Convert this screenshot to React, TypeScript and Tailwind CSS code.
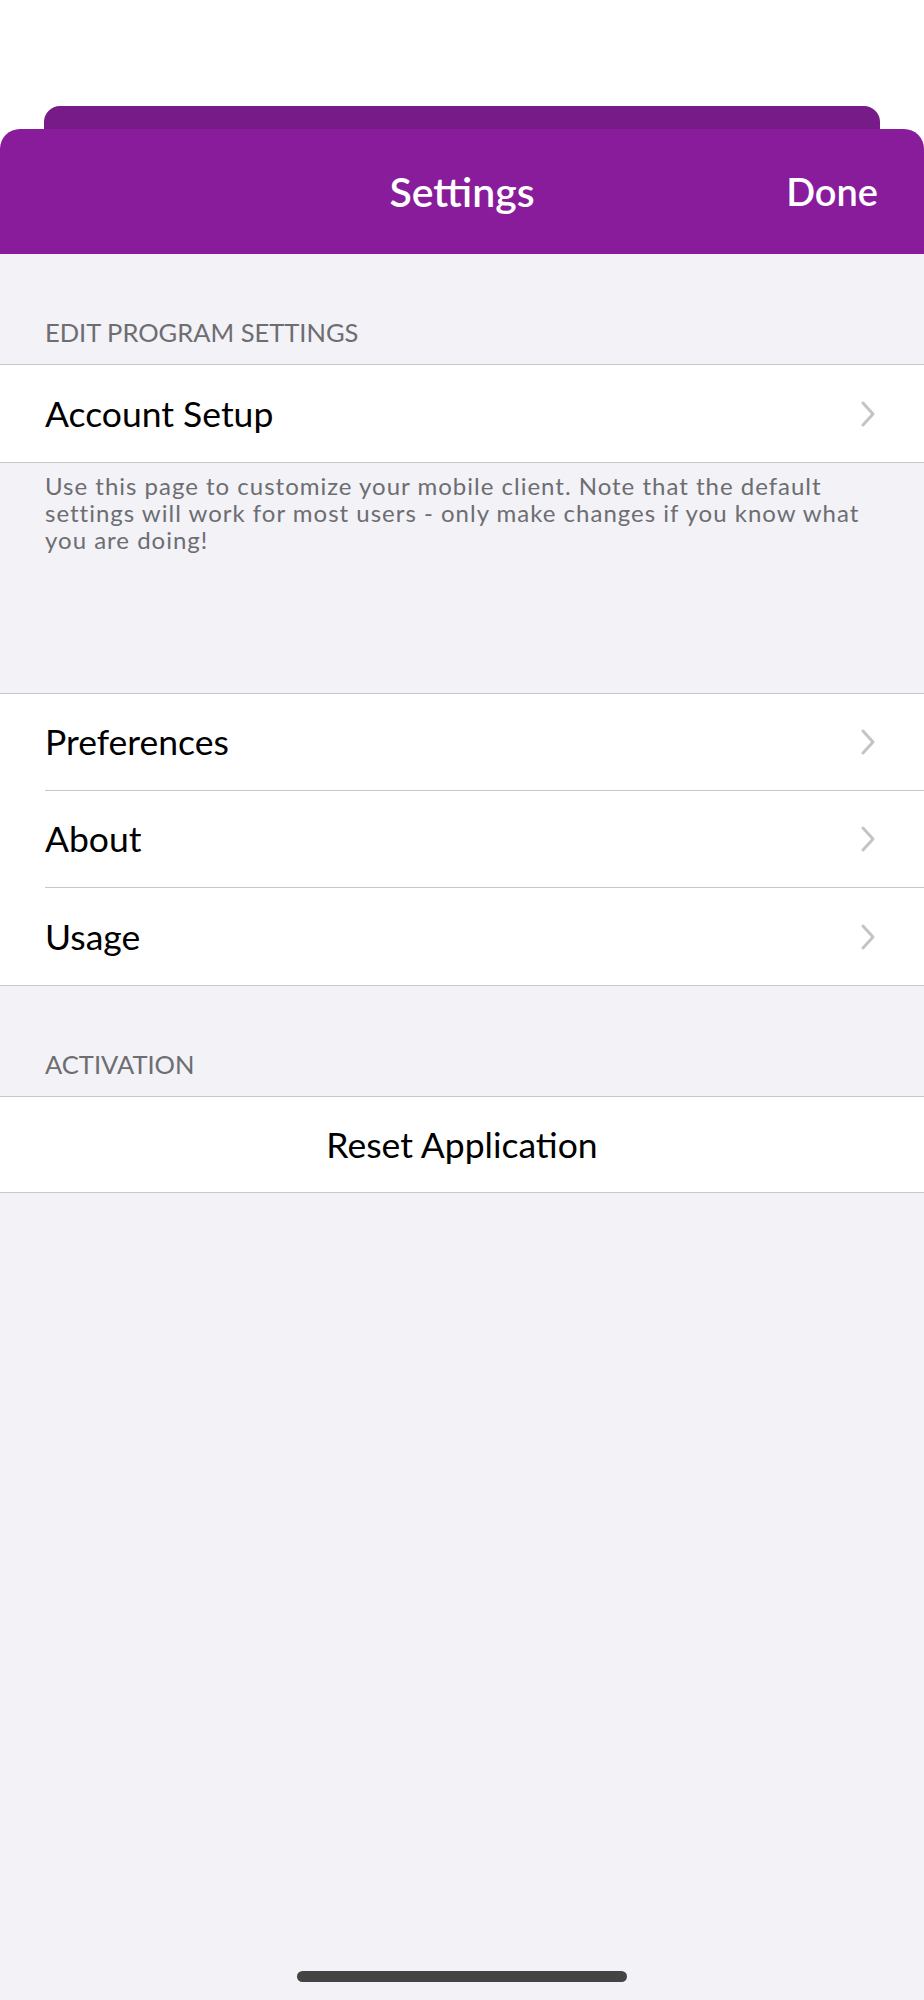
import React from 'react'

const font = { fontFamily: 'Lato, "Open Sans", "Liberation Sans", sans-serif' }

function Chevron() {
  return (
    <svg width="16" height="26" viewBox="0 0 16 26" fill="none" className="shrink-0">
      <path d="M3 2 L13 13 L3 24" stroke="#c4c4c8" strokeWidth="3" strokeLinecap="round" strokeLinejoin="round" />
    </svg>
  )
}

function Row({ label, last }: { label: string; last?: boolean }) {
  return (
    <div className="pl-[45px] bg-white">
      <div className={'flex items-center justify-between h-[97px] pr-[48px] ' + (last ? '' : 'border-b border-[#c8c7cc]')}>
        <span className="text-[35.5px] text-black">{label}</span>
        <Chevron />
      </div>
    </div>
  )
}

function SectionHeader({ title }: { title: string }) {
  return (
    <div className="h-[110px] flex items-end px-[45px] pb-[13px]">
      <span className="text-[25.5px] text-[#6d6d72] uppercase">{title}</span>
    </div>
  )
}

export default function App() {
  return (
    <div className="min-h-[2000px] flex flex-col bg-[#f2f2f7]" style={font}>
      <div className="bg-white pt-[106px]">
        <div className="h-[23px] mx-[44px] rounded-t-[16px] bg-[#761b87]" />
        <div className="h-[125px] rounded-t-[20px] bg-[#881c9a] relative flex items-center justify-center">
          <span className="text-white text-[41px] font-semibold">Settings</span>
          <span className="absolute right-[46px] text-white text-[38px] font-semibold">Done</span>
        </div>
      </div>

      <SectionHeader title="Edit Program Settings" />
      <div className="border-y border-[#c8c7cc]">
        <Row label="Account Setup" last />
      </div>
      <p className="pl-[45px] pr-[40px] pt-[9px] text-[24px] tracking-[1px] leading-[27px] text-[#6d6d72]">
        Use this page to customize your mobile client. Note that the default settings will work for most users - only make changes if you know what you are doing!
      </p>

      <div className="mt-[140px] border-y border-[#c8c7cc]">
        <Row label="Preferences" />
        <Row label="About" />
        <Row label="Usage" last />
      </div>

      <SectionHeader title="Activation" />
      <div className="border-y border-[#c8c7cc] bg-white h-[97px] flex items-center justify-center">
        <span className="text-[35.5px] text-black">Reset Application</span>
      </div>

      <div className="mt-auto mb-[18px] flex justify-center">
        <div className="w-[330px] h-[11px] rounded-full bg-[#444444]" />
      </div>
    </div>
  )
}
